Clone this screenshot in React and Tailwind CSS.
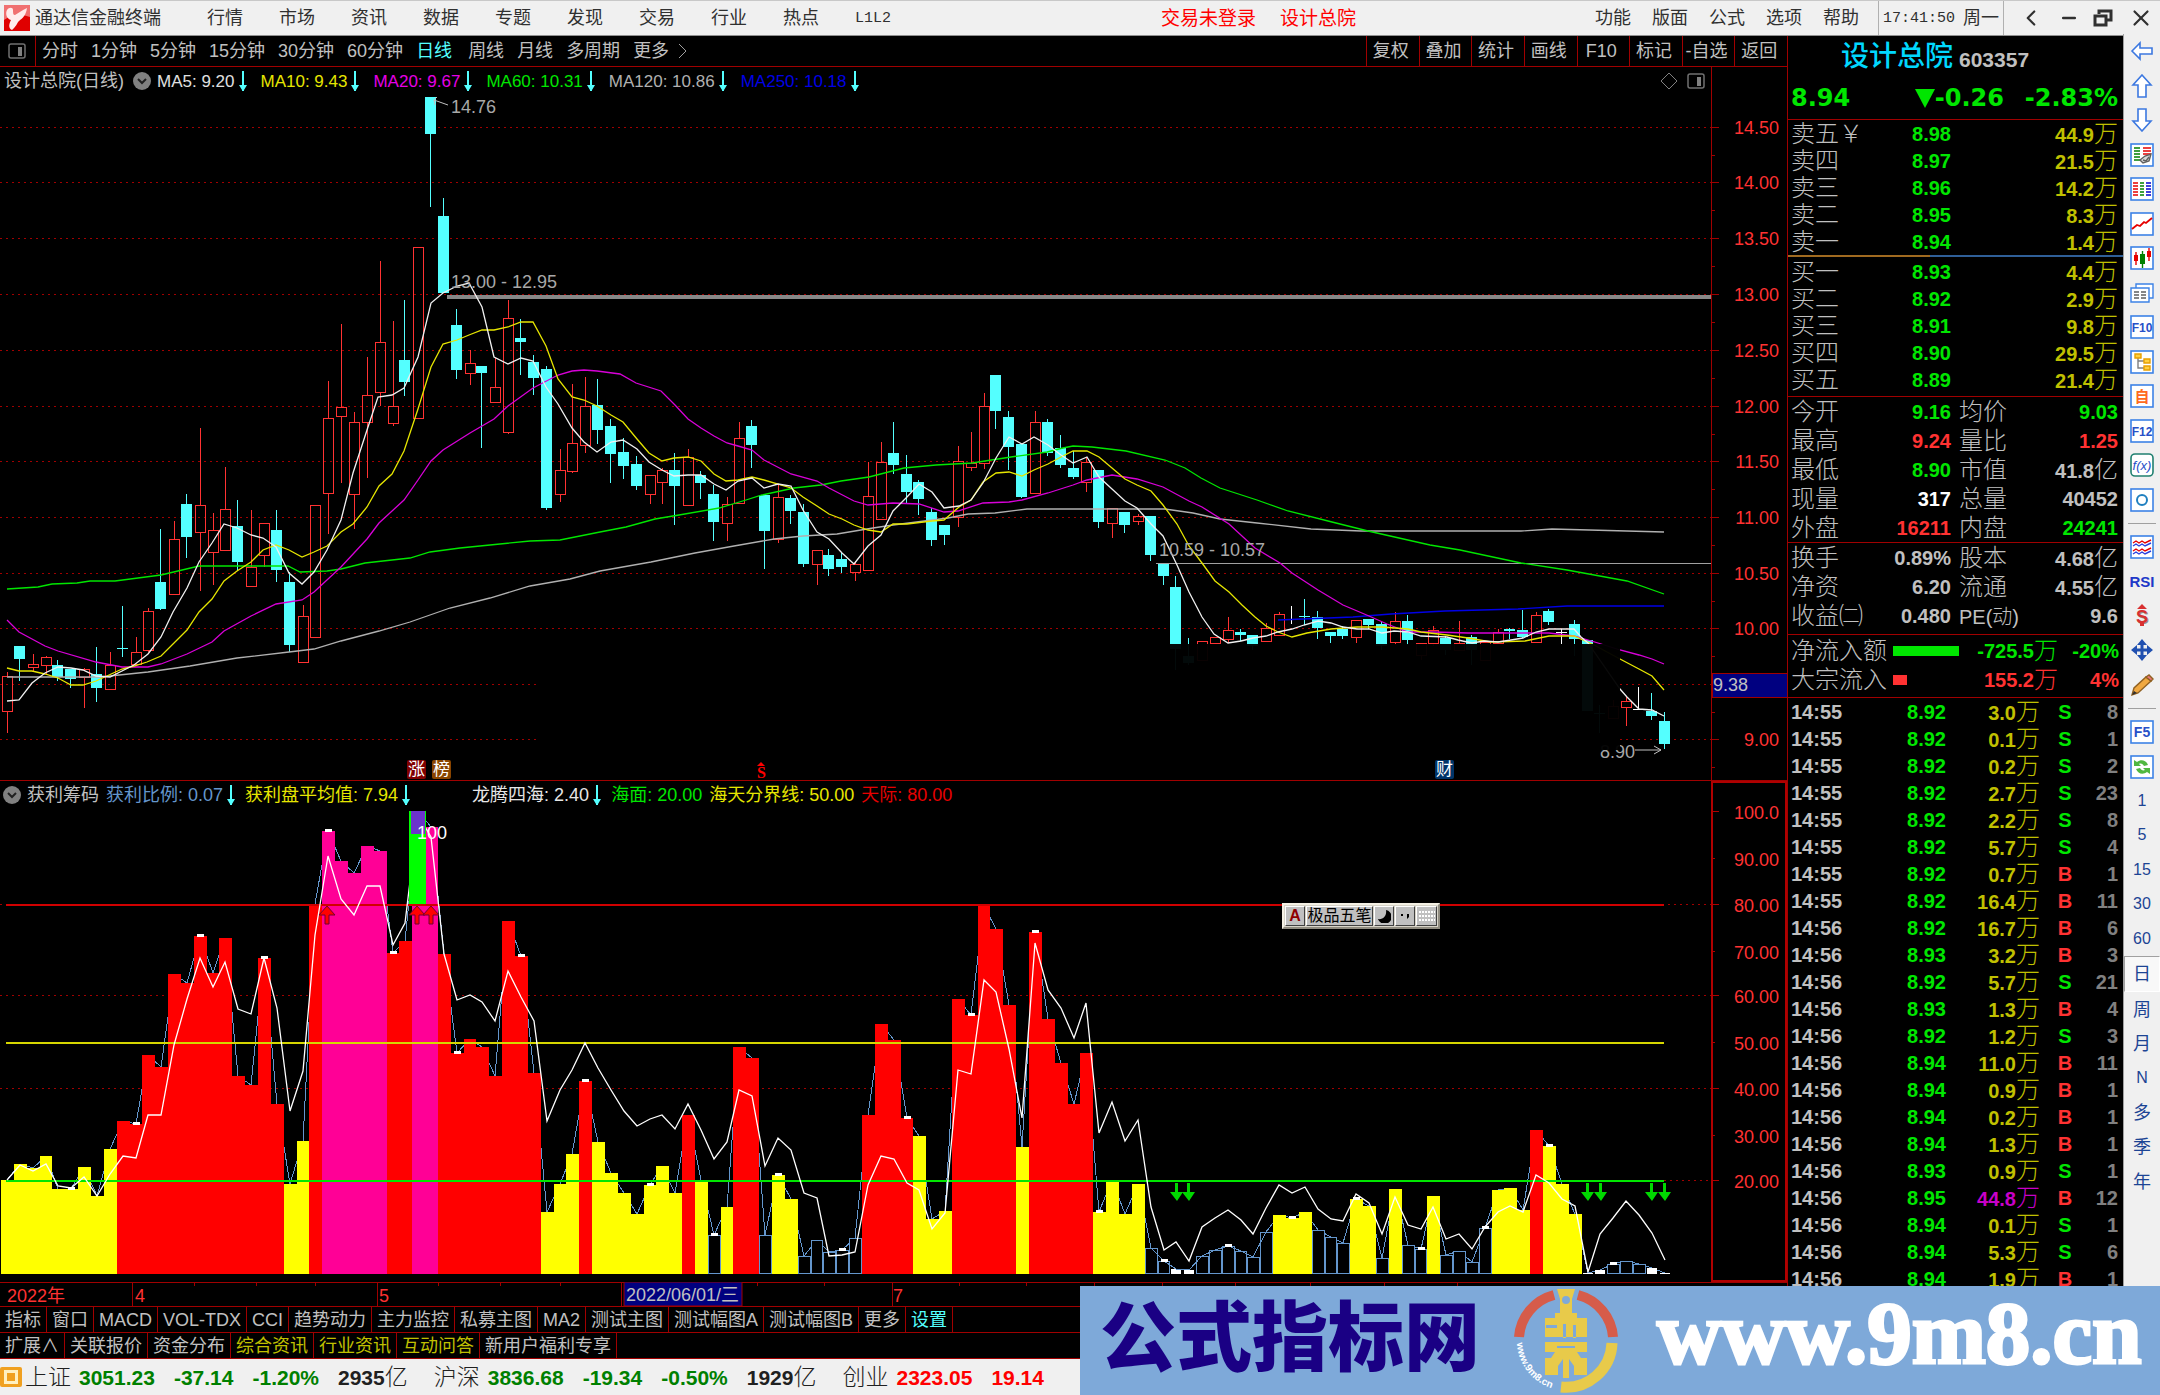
import { ChevronLeft, Minus, X } from 'lucide-react'

const UI = "font-['Liberation_Sans','Noto_Sans_CJK_SC',sans-serif]"

const MENU = ['行情', '市场', '资讯', '数据', '专题', '发现', '交易', '行业', '热点']
const MENU_RIGHT = ['功能', '版面', '公式', '选项', '帮助']
const PERIODS = ['分时', '1分钟', '5分钟', '15分钟', '30分钟', '60分钟', '日线', '周线', '月线', '多周期', '更多']
const TOOLS = ['复权', '叠加', '统计', '画线', 'F10', '标记', '-自选', '返回']

const MA = [
    ['MA5: 9.20', 'text-[#e0e0e0]'],
    ['MA10: 9.43', 'text-[#e6e600]'],
    ['MA20: 9.67', 'text-[#e600e6]'],
    ['MA60: 10.31', 'text-[#00e600]'],
    ['MA120: 10.86', 'text-[#b0b0b0]'],
    ['MA250: 10.18', 'text-[#0000e6]'],
]

const SELL = [
    ['卖五', '8.98', '44.9'],
    ['卖四', '8.97', '21.5'],
    ['卖三', '8.96', '14.2'],
    ['卖二', '8.95', '8.3'],
    ['卖一', '8.94', '1.4'],
]
const BUY = [
    ['买一', '8.93', '4.4'],
    ['买二', '8.92', '2.9'],
    ['买三', '8.91', '9.8'],
    ['买四', '8.90', '29.5'],
    ['买五', '8.89', '21.4'],
]

const G = 'text-[#00e600]'
const R = 'text-[#ff3232]'
const W = 'text-[#c0c0c0]'

const INFO = [
    ['今开', '9.16', G, '均价', '9.03', G],
    ['最高', '9.24', R, '量比', '1.25', R],
    ['最低', '8.90', G, '市值', '41.8亿', W],
    ['现量', '317', 'text-white', '总量', '40452', W],
    ['外盘', '16211', R, '内盘', '24241', G],
]
const INFO2 = [
    ['换手', '0.89%', W, '股本', '4.68亿', W],
    ['净资', '6.20', W, '流通', '4.55亿', W],
    ['收益㈡', '0.480', W, 'PE(动)', '9.6', W],
]

const TICKS = [
    ['14:55', '8.92', '3.0', 'S', 8],
    ['14:55', '8.92', '0.1', 'S', 1],
    ['14:55', '8.92', '0.2', 'S', 2],
    ['14:55', '8.92', '2.7', 'S', 23],
    ['14:55', '8.92', '2.2', 'S', 8],
    ['14:55', '8.92', '5.7', 'S', 4],
    ['14:55', '8.92', '0.7', 'B', 1],
    ['14:55', '8.92', '16.4', 'B', 11],
    ['14:56', '8.92', '16.7', 'B', 6],
    ['14:56', '8.93', '3.2', 'B', 3],
    ['14:56', '8.92', '5.7', 'S', 21],
    ['14:56', '8.93', '1.3', 'B', 4],
    ['14:56', '8.92', '1.2', 'S', 3],
    ['14:56', '8.94', '11.0', 'B', 11],
    ['14:56', '8.94', '0.9', 'B', 1],
    ['14:56', '8.94', '0.2', 'B', 1],
    ['14:56', '8.94', '1.3', 'B', 1],
    ['14:56', '8.93', '0.9', 'S', 1],
    ['14:56', '8.95', '44.8', 'B', 12],
    ['14:56', '8.94', '0.1', 'S', 1],
    ['14:56', '8.94', '5.3', 'S', 6],
    ['14:56', '8.94', '1.9', 'B', 1],
]

const TABS = ['指标', '窗口', 'MACD', 'VOL-TDX', 'CCI', '趋势动力', '主力监控', '私募主图', 'MA2', '测试主图', '测试幅图A', '测试幅图B', '更多', '设置']
const LINKS = ['扩展∧', '关联报价', '资金分布', '综合资讯', '行业资讯', '互动问答', '新用户福利专享']

const INDEXES = [
    { name: '上证', last: '3051.23', diff: '-37.14', pct: '-1.20%', amount: '2935', tone: 'text-[#008000]' },
    { name: '沪深', last: '3836.68', diff: '-19.34', pct: '-0.50%', amount: '1929', tone: 'text-[#008000]' },
    { name: '创业', last: '2323.05', diff: '19.14', tone: 'text-[#ff0000]' },
]

// kind, body top, body bottom, high, low
const CANDLES = [
    ['r', 676, 711, 672, 733], ['c', 646, 659, 646, 681], ['r', 664, 667, 654, 672], ['r', 657, 665, 656, 675],
    ['c', 665, 677, 660, 681], ['c', 669, 679, 669, 688], ['r', 669, 677, 668, 708], ['c', 674, 688, 647, 702],
    ['r', 665, 689, 652, 689], ['c', 648, 649, 606, 657], ['r', 652, 664, 637, 664], ['r', 611, 650, 608, 652],
    ['c', 582, 609, 529, 610], ['r', 539, 594, 521, 594], ['c', 504, 537, 494, 558], ['r', 505, 532, 428, 591],
    ['r', 530, 552, 513, 585], ['r', 509, 550, 467, 550], ['c', 526, 562, 500, 571], ['r', 567, 586, 510, 586],
    ['r', 523, 555, 523, 567], ['c', 530, 570, 510, 582], ['c', 582, 645, 572, 652], ['r', 616, 662, 605, 662],
    ['r', 505, 637, 505, 637], ['r', 418, 493, 381, 534], ['r', 407, 416, 324, 483], ['r', 422, 494, 412, 529],
    ['r', 395, 422, 357, 478], ['r', 342, 392, 261, 406], ['r', 406, 423, 321, 426], ['c', 360, 382, 300, 396],
    ['r', 247, 418, 247, 418], ['c', 97, 134, 97, 207], ['c', 216, 293, 198, 293], ['c', 325, 370, 309, 379],
    ['r', 363, 373, 350, 385], ['c', 366, 373, 366, 448], ['r', 387, 402, 358, 402], ['r', 318, 432, 300, 434],
    ['c', 338, 342, 319, 375], ['c', 362, 378, 355, 395], ['c', 369, 508, 366, 510], ['r', 470, 494, 449, 502],
    ['r', 443, 471, 384, 473], ['r', 406, 445, 377, 453], ['c', 405, 430, 379, 444], ['c', 426, 454, 419, 483],
    ['c', 452, 466, 438, 479], ['c', 464, 486, 456, 490], ['r', 475, 494, 475, 504], ['r', 470, 482, 468, 504],
    ['c', 470, 486, 453, 525], ['r', 457, 505, 449, 505], ['c', 475, 483, 471, 499], ['c', 494, 522, 485, 541],
    ['r', 504, 523, 497, 541], ['r', 438, 503, 422, 503], ['c', 426, 445, 420, 468], ['c', 495, 531, 495, 569],
    ['r', 497, 539, 484, 543], ['c', 498, 511, 495, 524], ['c', 512, 564, 504, 567], ['r', 550, 564, 550, 585],
    ['c', 555, 569, 549, 576], ['c', 559, 567, 552, 573], ['r', 564, 572, 561, 581], ['r', 496, 570, 462, 570],
    ['r', 462, 519, 442, 520], ['c', 453, 465, 422, 474], ['c', 474, 492, 455, 503], ['c', 482, 499, 480, 515],
    ['c', 512, 540, 508, 546], ['c', 525, 535, 525, 545], ['r', 461, 517, 446, 527], ['r', 463, 467, 432, 471],
    ['r', 406, 463, 393, 469], ['c', 375, 411, 375, 429], ['c', 417, 447, 411, 470], ['c', 444, 497, 444, 498],
    ['r', 422, 493, 411, 494], ['c', 422, 453, 419, 456], ['c', 448, 465, 435, 468], ['c', 468, 477, 451, 479],
    ['r', 462, 482, 457, 492], ['c', 470, 522, 470, 528], ['r', 508, 523, 508, 538], ['c', 512, 525, 512, 533],
    ['r', 516, 521, 514, 525], ['c', 516, 555, 516, 561], ['c', 564, 576, 564, 585], ['c', 587, 649, 576, 670],
    ['c', 656, 663, 638, 665], ['r', 641, 660, 641, 660], ['r', 637, 643, 637, 643], ['r', 630, 639, 617, 643],
    ['c', 632, 635, 629, 641], ['c', 635, 646, 635, 650], ['r', 628, 641, 623, 641], ['r', 614, 635, 612, 636],
    ['w', 619, 620, 606, 624], ['c', 616, 617, 599, 625], ['c', 617, 628, 611, 639], ['c', 632, 636, 632, 643],
    ['c', 629, 636, 626, 639], ['r', 620, 637, 620, 643], ['c', 619, 625, 619, 629], ['c', 624, 646, 622, 650],
    ['r', 621, 642, 612, 645], ['c', 621, 640, 615, 645], ['r', 643, 655, 643, 660], ['r', 630, 643, 626, 646],
    ['c', 638, 650, 636, 655], ['r', 643, 650, 621, 650], ['c', 637, 650, 635, 665], ['r', 642, 660, 642, 660],
    ['r', 632, 643, 629, 643], ['c', 629, 631, 628, 639], ['c', 630, 637, 610, 638], ['r', 615, 642, 612, 643],
    ['c', 611, 622, 609, 625], ['w', 632, 633, 629, 644], ['c', 624, 639, 620, 656], ['c', 640, 711, 640, 711],
    ['c', 713, 714, 705, 733], ['r', 706, 718, 700, 718], ['r', 701, 707, 696, 726], ['w', 709, 710, 687, 710],
    ['c', 711, 716, 693, 720], ['c', 721, 744, 712, 749],
]

const MA5 =
    '7,701 19,700 32,683 45,673 58,667 71,668 83,670 96,676 110,677 122,671 134,665 148,654 161,637 173,612 187,588 199,562 212,543 224,524 237,528 251,535 263,538 276,547 289,573 302,584 314,572 327,550 341,520 353,473 367,430 378,397 392,395 404,388 418,357 431,303 443,293 457,286 469,283 482,307 494,357 508,364 521,358 533,361 546,387 558,404 572,428 584,442 597,452 611,442 623,440 637,449 649,462 662,470 674,476 688,475 701,475 714,484 726,490 738,481 752,478 764,488 778,484 791,486 803,510 817,532 829,539 842,553 854,564 868,546 881,535 893,511 907,497 919,484 932,492 944,508 959,506 971,500 983,483 996,458 1009,437 1022,444 1034,437 1048,445 1061,455 1073,463 1087,457 1099,477 1112,489 1125,501 1137,508 1151,524 1163,536 1177,565 1189,592 1202,617 1214,634 1228,643 1241,641 1253,638 1266,636 1278,632 1292,629 1304,625 1318,621 1331,623 1343,627 1357,629 1369,629 1382,633 1394,631 1408,632 1421,636 1447,637 1458,640 1472,643 1484,641 1498,642 1511,640 1523,638 1536,632 1549,629 1562,629 1574,629 1581,637 1588,643 1620,689 1627,697 1639,709 1652,710 1664,716'
const MA10 =
    '7,668 19,671 32,671 45,674 58,678 71,685 83,685 96,681 109,675 122,669 134,666 147,662 161,656 173,644 187,630 199,612 212,599 224,581 237,571 251,562 263,550 276,545 289,550 302,557 314,552 327,546 341,532 353,524 367,507 379,486 392,474 404,451 418,409 431,367 443,344 457,340 469,335 482,330 494,330 508,327 521,322 533,322 546,346 558,379 572,397 584,400 597,406 611,415 623,422 637,439 649,453 662,461 674,458 688,457 701,461 714,474 726,481 738,480 752,477 764,480 778,484 791,488 803,497 817,506 829,514 842,519 854,525 868,530 881,532 893,524 907,524 932,521 944,520 959,507 971,500 983,482 996,473 1009,472 1022,476 1034,470 1048,464 1061,457 1073,451 1087,451 1099,457 1112,468 1125,479 1137,485 1151,491 1163,505 1177,524 1189,546 1202,563 1215,581 1229,592 1242,605 1255,617 1266,626 1278,632 1292,637 1307,633 1319,631 1331,629 1357,627 1382,627 1408,629 1421,632 1447,635 1468,638 1491,642 1525,641 1549,636 1574,636 1594,645 1620,659 1639,669 1652,676 1664,690'
const MA20 =
    '7,620 19,632 45,646 58,651 96,662 122,667 148,667 161,664 187,654 212,642 224,631 251,616 276,604 302,600 314,592 341,567 367,539 379,523 404,500 418,480 431,461 443,450 470,433 494,419 508,406 533,388 558,375 572,371 584,370 597,371 620,374 636,383 661,391 675,405 688,419 701,428 714,436 727,443 738,446 752,450 764,460 791,474 817,481 829,488 854,501 868,505 893,503 919,504 944,512 958,511 983,503 1009,502 1022,500 1048,493 1073,485 1087,480 1112,475 1137,479 1163,487 1189,501 1202,507 1229,524 1255,548 1280,563 1292,573 1318,590 1343,605 1369,616 1387,624 1408,632 1433,632 1468,633 1529,633 1549,633 1574,636 1598,643 1620,650 1639,655 1652,659 1664,664'
const MA60 =
    '7,589 38,587 52,584 77,583 90,581 115,581 161,575 199,566 224,566 288,566 300,572 327,571 341,569 365,563 410,558 430,552 460,548 490,545 530,541 560,540 600,532 626,527 655,519 679,515 719,508 746,500 762,495 794,488 821,485 841,481 869,477 904,468 936,465 972,463 1011,457 1047,452 1063,448 1073,446 1092,447 1126,451 1165,460 1185,468 1201,478 1220,488 1257,500 1288,511 1332,522 1368,531 1430,545 1460,550 1521,563 1567,570 1627,581 1664,594'
const MA120 =
    '7,677 100,677 148,672 190,666 237,658 289,652 314,649 341,641 379,631 410,622 450,608 490,598 530,586 570,579 600,571 651,562 695,553 734,546 774,539 803,536 837,534 873,528 893,525 948,518 968,514 995,513 1027,509 1165,509 1193,513 1220,519 1257,523 1311,529 1361,531 1521,531 1552,529 1664,532'
const MA250 = '1278,620 1353,617 1391,614 1445,611 1518,609 1567,606 1664,606'

// bar colour + top edge: y yellow, r red, m magenta, h hollow, w white
const BARS =
    'y1180 y1164 y1168 y1156 y1189 y1189 y1167 y1196 y1149 r1121 r1124 r1055 r1067 r974 r983 r936 r973 r938 r1076 r1085 r958 r1104 y1184 y1141 r904 m831 m861 m873 m846 m851 r953 r941 m811 m827 r954 r1053 r1039 r1047 r1076 r921 r956 r1073 y1212 y1184 y1154 r1081 y1142 y1173 y1193 y1214 y1185 y1166 y1193 r1115 y1180 h1235 y1207 r1047 r1058 h1235 y1175 y1199 h1256 h1240 h1252 h1250 h1238 r1115 r1024 r1040 r1118 y1136 y1219 y1211 r999 r1015 r906 r929 r1005 y1147 r932 r1019 r1063 r1104 r1053 y1212 y1180 y1214 y1184 h1248 h1261 w1269 w1270 h1256 h1250 h1246 h1251 h1257 h1232 y1215 y1218 y1212 h1230 h1237 h1243 y1199 y1206 h1258 y1189 h1245 h1249 y1196 h1255 h1251 h1262 h1228 y1190 y1188 y1210 r1130 y1146 y1184 y1214 w1273 w1270 h1264 h1261 h1264 w1268 w1273'
        .split(' ')
        .map(s => [s[0], Number(s.slice(1))])

const AVG = [
    1180, 1165, 1171, 1164, 1186, 1188, 1177, 1196, 1174, 1156, 1158, 1115, 1115, 1045, 999, 958, 987, 962, 1009, 1014,
    958, 1008, 1111, 1071, 935, 856, 899, 915, 886, 886, 945, 923, 815, 837, 954, 1000, 995, 1002, 1021, 971,
    997, 1021, 1121, 1090, 1070, 1043, 1068, 1090, 1111, 1126, 1119, 1115, 1129, 1104, 1130, 1159, 1142, 1090, 1096, 1166,
    1138, 1150, 1193, 1198, 1256, 1255, 1252, 1185, 1156, 1159, 1183, 1190, 1229, 1213, 1070, 1074, 980, 992, 1049, 1118,
    943, 990, 1008, 1038, 1003, 1133, 1102, 1141, 1120, 1207, 1250, 1242, 1261, 1227, 1218, 1210, 1220, 1234, 1208, 1185,
    1193, 1187, 1209, 1219, 1221, 1194, 1203, 1234, 1197, 1225, 1229, 1207, 1239, 1234, 1249, 1227, 1212, 1206, 1212, 1175,
    1183, 1199, 1206, 1272, 1234, 1218, 1201, 1215, 1233, 1260,
]

const FILL = { y: '#ffff00', r: '#ff0000', m: '#ff0096', h: '#000000', w: '#ffffff' }
const cx = i => Math.round(7 + i * 12.85)

const PRICES = [
    ['14.50', 127], ['14.00', 182], ['13.50', 238], ['13.00', 294], ['12.50', 350], ['12.00', 406],
    ['11.50', 461], ['11.00', 517], ['10.50', 573], ['10.00', 628], ['', 684], ['9.00', 739],
]
const LEVELS = [
    ['100.0', 811], ['90.00', 858], ['80.00', 904], ['70.00', 951], ['60.00', 995],
    ['50.00', 1042], ['40.00', 1088], ['30.00', 1135], ['20.00', 1180],
]

function DownArrow() {
    return (
        <svg viewBox="0 0 8 20" className="ml-1 h-5 w-2 shrink-0" fill="#54ffff">
            <path d="M3 0h2v14h3l-3 5v1H3v-1l-3-5h3z" />
        </svg>
    )
}

function FoldButton() {
    return (
        <button aria-label="折叠" className="grid size-[18px] place-items-center rounded-full bg-[#808080]">
            <svg viewBox="0 0 12 12" className="size-3" fill="none" stroke="#202020" strokeWidth="2">
                <path d="M2 4l4 4 4-4" />
            </svg>
        </button>
    )
}

function PaneIcon() {
    return (
        <svg viewBox="0 0 18 16" className="h-4 w-[18px]" fill="none" stroke="#707070" strokeWidth="1.5">
            <rect x="1" y="1" width="16" height="14" rx="2" />
            <rect x="10" y="4" width="4" height="9" fill="#808080" stroke="none" />
        </svg>
    )
}

function MenuBar() {
    return (
        <header className="flex h-9 items-center border-t border-b border-t-[#c8c8c8] border-b-[#909090] bg-[#f0f0f0] text-lg leading-none whitespace-nowrap text-[#303030]">
            <svg viewBox="0 0 26 26" className="mr-[5px] ml-1 size-[26px]">
                <rect width="26" height="26" fill="#e00000" />
                <path d="M0 0h26v12C18 9 8 9 0 15z" fill="#f07070" />
                <path d="M3 5c2-3 6-3 6 0 0 3 0 5 2 5 4-2 7-5 12-7-1 7-4 10-8 13-2 2-3 6-7 9-4-2-3-6-1-10C3 14 1 9 3 5z" fill="#ffecec" />
            </svg>
            <span>通达信金融终端</span>
            <nav className="ml-[46px] flex items-center gap-9">
                {MENU.map(m => (
                    <button key={m}>{m}</button>
                ))}
                <button className="font-['Liberation_Mono',monospace] text-[15px]">L1L2</button>
            </nav>
            <div className="ml-[270px] flex gap-6 text-[19px] text-[#ff0000]">
                <button>交易未登录</button>
                <button>设计总院</button>
            </div>
            <div className="ml-auto flex h-full items-center">
                <nav className="flex gap-[21px] pr-[19px]">
                    {MENU_RIGHT.map(m => (
                        <button key={m}>{m}</button>
                    ))}
                </nav>
                <div className="flex h-full w-[126px] items-center gap-2 border-x border-[#b0b0b0] pl-1">
                    <span className="font-['Liberation_Mono',monospace] text-[15px]">17:41:50</span>
                    <span>周一</span>
                </div>
                <div className="flex w-[156px] items-center justify-between pr-[6px] pl-[14px]">
                    <button aria-label="后退"><ChevronLeft size={26} strokeWidth={2} /></button>
                    <button aria-label="最小化"><Minus size={20} strokeWidth={3} /></button>
                    <button aria-label="还原">
                        <svg viewBox="0 0 20 18" className="h-[18px] w-5" fill="none" stroke="#303030" strokeWidth="3">
                            <path d="M6 5V2h12v9h-4M2 7h11v9H2z" />
                        </svg>
                    </button>
                    <button aria-label="关闭"><X size={26} strokeWidth={2} /></button>
                </div>
            </div>
        </header>
    )
}

function PeriodBar() {
    return (
        <div className="flex h-[31px] items-stretch border-b border-[#a00000] text-lg leading-none whitespace-nowrap text-[#c0c0c0]">
            <button aria-label="面板" className="flex w-9 items-center border-r border-[#a00000] pl-2">
                <PaneIcon />
            </button>
            <div className="flex items-center gap-[13px] pl-[6px]">
                {PERIODS.map(p => (
                    <button key={p} className={p === '日线' ? 'pr-[3px] text-[#54ffff]' : ''}>{p}</button>
                ))}
                <svg viewBox="0 0 9 16" className="-ml-1 h-4 w-[9px]" fill="none" stroke="#a0a0a0">
                    <path d="M1 1l7 7-7 7" />
                </svg>
            </div>
            <div className="ml-auto grid w-[421px] grid-cols-8">
                {TOOLS.map(t => (
                    <button key={t} className="border-l border-[#a00000] pr-1">{t}</button>
                ))}
            </div>
        </div>
    )
}

function Candle({ i, data }) {
    const [kind, top, bottom, high, low] = data
    const x = cx(i)
    if (kind === 'r') {
        return (
            <g fill="none" stroke="#ff3232">
                <path d={`M${x} ${high}V${top}M${x} ${bottom}V${low}`} />
                <rect x={x - 5} y={top} width="10" height={bottom - top} />
            </g>
        )
    }
    const color = kind === 'w' ? '#ffffff' : '#54ffff'
    return (
        <g fill={color}>
            <rect x={x - 1} y={high} width="1" height={low - high} />
            <rect x={x - 6} y={top} width="11" height={bottom - top} />
        </g>
    )
}

function Badge({ x, y, fill, children }) {
    return (
        <g>
            <rect x={x} y={y} width="19" height="19" rx="2" fill={fill} />
            <text x={x + 1} y={y + 15} fontSize="17" fill="#fff">{children}</text>
        </g>
    )
}

function PriceChart() {
    return (
        <section>
            <div className="flex h-7 items-stretch">
                <div className="flex flex-1 items-center pl-1 text-[17px] leading-none whitespace-nowrap">
                    <span className="mr-[9px] text-lg leading-none text-[#c0c0c0]">设计总院(日线)</span>
                    <FoldButton />
                    <div className="flex gap-[14px] pl-[6px]">
                        {MA.map(([text, tone]) => (
                            <span key={text} className={`flex items-center ${tone}`}>
                                {text}
                                <DownArrow />
                            </span>
                        ))}
                    </div>
                    <svg viewBox="0 0 18 18" className="mr-[9px] ml-auto size-[18px]" fill="none" stroke="#808080">
                        <path d="M9 1l8 8-8 8-8-8z" />
                    </svg>
                    <div className="pr-[6px]"><PaneIcon /></div>
                </div>
                <div className="w-[76px] border-l border-[#a00000]" />
            </div>
            <svg viewBox="0 95 1787 686" className="block w-full overflow-visible" fontSize="18">
                <g stroke="#a00000" strokeDasharray="2 4" shapeRendering="crispEdges">
                    {PRICES.map(([, y]) => (
                        <path key={y} d={y > 680 ? `M0 ${y}H538M1620 ${y}H1711` : `M0 ${y}H1711`} />
                    ))}
                </g>
                <rect x="447" y="295" width="1264" height="4" fill="#888888" />
                <rect x="1156" y="563" width="555" height="1" fill="#a0a0a0" />
                <g shapeRendering="crispEdges">
                    {CANDLES.map((c, i) => (
                        <Candle key={i} i={i} data={c} />
                    ))}
                </g>
                <g fill="none" strokeWidth="1.3">
                    <polyline points={MA250} stroke="#0000e6" />
                    <polyline points={MA120} stroke="#b0b0b0" />
                    <polyline points={MA60} stroke="#00e600" />
                    <polyline points={MA20} stroke="#d800d8" />
                    <polyline points={MA10} stroke="#e6e600" />
                    <polyline points={MA5} stroke="#f0f0f0" />
                </g>
                <g fill="#a8a8a8">
                    <text x="451" y="113">14.76</text>
                    <text x="451" y="288">13.00 - 12.95</text>
                    <text x="1159" y="556">10.59 - 10.57</text>
                    <text x="1600" y="758">8.90</text>
                </g>
                <path d="M448 105l-14-5M437 97l-3 3 1 5" fill="none" stroke="#c0c0c0" />
                <path d="M1635 750h26M1654 746l7 4-7 4" fill="none" stroke="#c0c0c0" />
                <rect x="538" y="644" width="1082" height="106" fill="#000" fillOpacity=".96" />
                <Badge x={407} y={760} fill="#800000">涨</Badge>
                <Badge x={432} y={760} fill="#8a4500">榜</Badge>
                <Badge x={1435} y={760} fill="#003468">财</Badge>
                <path d="M761 762l4 4h-8z" fill="#ff0000" />
                <text x="757" y="778" fontSize="16" fontWeight="700" fill="#ff0000" fontFamily="Liberation Serif">S</text>

                <g stroke="#a00000" shapeRendering="crispEdges">
                    <path d="M1711.5 95V780M0 780.5H1787" />
                    {PRICES.map(([, y]) => (
                        <path key={y} d={`M1712 ${y}h7M1712 ${y + 28}h3`} />
                    ))}
                </g>
                <rect x="1712" y="673" width="75" height="24" fill="#000080" stroke="#a00000" shapeRendering="crispEdges" />
                <text x="1713" y="691" fill="#c0c0c0">9.38</text>
                <g fill="#ff3232" textAnchor="end">
                    {PRICES.map(([t, y]) => (
                        <text key={y} x="1779" y={y + 7}>{t}</text>
                    ))}
                </g>
            </svg>
        </section>
    )
}

function ProfitChart() {
    return (
        <section>
            <div className="flex h-7 items-center pl-[3px] text-lg leading-none whitespace-nowrap">
                <FoldButton />
                <span className="ml-[6px] text-[#c0c0c0]">获利筹码</span>
                <span className="ml-[7px] flex items-center text-[#6496cc]">获利比例: 0.07<DownArrow /></span>
                <span className="ml-[10px] flex items-center text-[#e6e600]">获利盘平均值: 7.94<DownArrow /></span>
                <span className="ml-[62px] flex items-center text-[#e6e6e6]">龙腾四海: 2.40<DownArrow /></span>
                <span className="ml-[10px] text-[#00e600]">海面: 20.00</span>
                <span className="ml-[7px] text-[#e6e600]">海天分界线: 50.00</span>
                <span className="ml-[7px] text-[#e60000]">天际: 80.00</span>
            </div>
            <svg viewBox="0 809 1787 473" className="block w-full overflow-visible" fontSize="18">
                <g shapeRendering="crispEdges">
                    <g stroke="#a00000" strokeDasharray="2 4">
                        <path d="M0 904.5H1711M0 995.5H1711M0 1088.5H1711M1664 1180.5H1711" />
                    </g>
                    <polyline points={BARS.map(([, y], i) => `${cx(i)},${y}`).join(' ')} fill="none" stroke="#6496cc" />
                    {BARS.map(([kind, y], i) => {
                        const x = cx(i) - 6
                        const w = cx(i + 1) - cx(i)
                        return kind === 'h' ? (
                            <rect key={i} x={x + 0.5} y={y + 0.5} width={w - 1} height={1273 - y} fill="#000" stroke="#6496cc" />
                        ) : (
                            <rect key={i} x={kind === 'w' ? x + 1 : x} y={y} width={kind === 'w' ? 10 : w} height={1274 - y} fill={FILL[kind]} />
                        )
                    })}
                    <polyline
                        points={BARS.map(([, y], i) => `${cx(i)},${y}`).slice(89, 99).join(' ')}
                        fill="none"
                        stroke="#6496cc"
                    />
                    {BARS.map(([, y], i) => (i >= 5 && i % 5 === 0 ? <rect key={i} x={cx(i) - 3} y={y - 2} width="7" height="3" fill="#fff" /> : null))}
                    <path d="M6 904.5H1664" stroke="#d00000" strokeWidth="2" />
                    <path d="M6 1042.5H1664" stroke="#d6d600" strokeWidth="2" />
                    <path d="M6 1180.5H1664" stroke="#00e600" strokeWidth="2" />
                </g>
                <polyline points={AVG.map((y, i) => `${cx(i)},${y}`).join(' ')} fill="none" stroke="#fff" strokeWidth="1.3" />
                <rect x="409" y="811" width="17" height="93" fill="#00ff00" />
                <rect x="411" y="811" width="14" height="23" fill="#6b33cc" />
                <text x="417" y="839" fill="#fff">100</text>
                {[327, 417, 431].map(x => (
                    <path key={x} d={`M${x} 906l8 9h-6v9h-4v-9h-6z`} fill="#ff0000" stroke="#700030" strokeWidth="1" />
                ))}
                {[1176, 1188, 1587, 1600, 1651, 1664].map(x => (
                    <path key={x} d={`M${x - 1} 1183h3v9h5l-6 9-7-9h5z`} fill="#00d800" />
                ))}
                <g stroke="#b00000" fill="none" shapeRendering="crispEdges">
                    <rect x="1712" y="782" width="74" height="499" strokeWidth="2" />
                    {LEVELS.map(([t, y], i) => (
                        <path key={t} d={`M1712 ${y}h${i % 2 ? 3 : 7}`} />
                    ))}
                </g>
                <g fill="#ff3232" textAnchor="end">
                    {LEVELS.map(([t, y]) => (
                        <text key={t} x="1779" y={y + 8}>{t}</text>
                    ))}
                </g>
            </svg>
        </section>
    )
}

function TimeAxis() {
    return (
        <svg viewBox="0 1282 1787 24" className="block w-full" fontSize="18" fill="#ff3232">
            <path
                d="M0 1282.5H1787M132.5 1282V1306M377.5 1282V1306M621.5 1282V1306M892.5 1282V1306M194.5 1282v4M256.5 1282v4M315.5 1282v4M438.5 1282v4M500.5 1282v4M560.5 1282v4M757.5 1282v4M824.5 1282v4M959.5 1282v4M1026.5 1282v4M1094.5 1282v4M1162.5 1282v4M1235.5 1282v4M1310.5 1282v4M1384.5 1282v4M1457.5 1282v4"
                stroke="#a00000"
                shapeRendering="crispEdges"
            />
            <text x="7" y="1302">2022年</text>
            <text x="135" y="1302">4</text>
            <text x="379" y="1302">5</text>
            <text x="893" y="1302">7</text>
            <rect x="624" y="1282" width="118" height="24" fill="#000080" stroke="#a00000" />
            <text x="626" y="1301" fill="#c0c0c0">2022/06/01/三</text>
        </svg>
    )
}

function TabRow({ items, tone }) {
    return (
        <div className="flex h-[26px] border-t border-[#a00000] text-lg leading-none whitespace-nowrap">
            {items.map(t => (
                <button key={t} className={`border-r border-[#a00000] px-[5px] ${tone(t)}`}>{t}</button>
            ))}
        </div>
    )
}

// number in bold with a light 万 / 亿 unit after it
function Qty({ value }) {
    const unit = /[万亿]$/.test(value) ? value.slice(-1) : ''
    return (
        <>
            <b className="text-xl leading-none">{unit ? value.slice(0, -1) : value}</b>
            {unit && <span className="text-2xl leading-none font-light">{unit}</span>}
        </>
    )
}

function OrderBook({ rows, label }) {
    return (
        <table aria-label={label} className="w-full table-fixed leading-none whitespace-nowrap">
            <tbody>
                {rows.map(([name, price, vol]) => (
                    <tr key={name} className="h-[27px]">
                        <td className="w-[80px] p-0 pl-[3px] text-2xl leading-none font-light text-[#c0c0c0]">
                            {name}
                            {name === '卖五' && <span className="text-2xl leading-none">￥</span>}
                        </td>
                        <td className="w-[83px] p-0 text-right text-[#00e600]"><Qty value={price} /></td>
                        <td className="p-0 pr-[5px] text-right text-[#c0c000]"><Qty value={vol + '万'} /></td>
                    </tr>
                ))}
            </tbody>
        </table>
    )
}

function InfoTable({ rows }) {
    return (
        <table className="w-full table-fixed leading-none whitespace-nowrap">
            <tbody>
                {rows.map(([a, av, at, b, bv, bt]) => (
                    <tr key={a} className="h-[29px]">
                        <td className="w-[83px] p-0 pl-[3px] text-2xl leading-none font-light text-[#c0c0c0]">{a}</td>
                        <td className={`w-[80px] p-0 text-right ${at}`}><Qty value={av} /></td>
                        <td className="w-[80px] p-0 pl-2 text-2xl leading-none font-light text-[#c0c0c0]">
                            {b === 'PE(动)' ? <b className="text-xl leading-none">PE(<span className="font-light">动</span>)</b> : b}
                        </td>
                        <td className={`p-0 pr-[5px] text-right ${bt}`}><Qty value={bv} /></td>
                    </tr>
                ))}
            </tbody>
        </table>
    )
}

function QuotePanel() {
    return (
        <aside className="w-[336px] shrink-0 border-l border-[#a00000]">
            <div className="h-[84px] border-b border-[#a00000]">
                <div className="flex h-[42px] items-center gap-[6px] pl-[53px] leading-none">
                    <h1 className="text-[28px] font-medium text-[#00d8ff]">设计总院</h1>
                    <b className="pt-1 text-[21px] text-[#c0c0c0]">603357</b>
                </div>
                <div className="flex h-[40px] items-center pr-[5px] pl-[3px] font-['DejaVu_Sans',sans-serif] text-2xl leading-none font-bold text-[#00e600]">
                    <span>8.94</span>
                    <svg viewBox="0 0 20 20" className="ml-auto size-5" fill="#00e600">
                        <path d="M0 1h20L10 20z" />
                    </svg>
                    <span className="w-[70px]">-0.26</span>
                    <span className="ml-[20px]">-2.83%</span>
                </div>
            </div>
            <OrderBook rows={SELL} label="卖盘" />
            <div className="flex h-[2px]">
                <div className="w-[142px] bg-[#a06a20]" />
                <div className="flex-1 bg-[#2f5f98]" />
            </div>
            <div className="border-b border-[#a00000] pt-px pb-[3px]">
                <OrderBook rows={BUY} label="买盘" />
            </div>
            <div className="border-b border-[#a00000]"><InfoTable rows={INFO} /></div>
            <div className="border-b border-[#a00000] pb-1"><InfoTable rows={INFO2} /></div>
            <div className="border-b border-[#a00000] pt-px pr-1 pb-[3px] pl-[3px] leading-none whitespace-nowrap">
                <div className="flex h-[29px] items-center">
                    <span className="w-[102px] text-2xl leading-none font-light text-[#c0c0c0]">净流入额</span>
                    <div className="h-[10px] w-[66px] bg-[#00e600]" />
                    <div className="flex flex-1 items-center justify-end text-[#00e600]"><Qty value="-725.5万" /></div>
                    <div className="w-[61px] text-right text-[#00e600]"><Qty value="-20%" /></div>
                </div>
                <div className="flex h-[29px] items-center">
                    <span className="w-[102px] text-2xl leading-none font-light text-[#c0c0c0]">大宗流入</span>
                    <div className="h-[10px] w-[14px] bg-[#ff3232]" />
                    <div className="flex flex-1 items-center justify-end text-[#ff3232]"><Qty value="155.2万" /></div>
                    <div className="w-[61px] text-right text-[#ff3232]"><Qty value="4%" /></div>
                </div>
            </div>
            <table aria-label="成交明细" className="w-full table-fixed text-xl leading-none font-bold whitespace-nowrap">
                <tbody>
                    {TICKS.map(([time, price, vol, side, n], i) => (
                        <tr key={i} className="h-[27px]">
                            <td className="w-[75px] p-0 pl-[3px] text-[#c0c0c0]">{time}</td>
                            <td className="w-[83px] p-0 text-right text-[#00e600]">{price}</td>
                            <td className={`w-[94px] p-0 text-right ${vol === '44.8' ? 'text-[#c800c8]' : 'text-[#c0c000]'}`}>
                                <Qty value={vol + '万'} />
                            </td>
                            <td className={`w-[50px] p-0 text-center ${side === 'S' ? G : R}`}>{side}</td>
                            <td className="p-0 pr-[5px] text-right text-[#808080]">{n}</td>
                        </tr>
                    ))}
                </tbody>
            </table>
        </aside>
    )
}

function Glyph({ children, plain }) {
    return (
        <svg viewBox="0 0 24 24" className="size-6" fill="none" strokeWidth="1.4">
            {!plain && <rect x="1" y="1" width="22" height="22" fill="#fff" stroke="#3c82e6" strokeWidth="1.6" />}
            {children}
        </svg>
    )
}

const ARROW = { fill: '#fff', stroke: '#3c78e0', strokeWidth: 1.6 }
const LABEL = { fill: '#2850c8', fontWeight: 700, textAnchor: 'middle' }

const ICONS = [
    ['后退', <Glyph plain><path d="M2 12l8-8v5h12v6H10v5z" {...ARROW} /></Glyph>],
    ['上翻', <Glyph plain><path d="M12 1l9 10h-5v12H8V11H3z" {...ARROW} /></Glyph>],
    ['下翻', <Glyph plain><path d="M12 23l9-10h-5V1H8v12H3z" {...ARROW} /></Glyph>],
    ['报表', <Glyph>
        <path d="M4 5h6M4 8h6M4 11h6M4 14h6M4 17h6" stroke="#008000" />
        <path d="M13 5h8M13 8h8M13 11h8" stroke="#e60000" />
        <path d="M10 17l5-4 6-2-2 7-6 2z" fill="#d8d8d8" stroke="#606060" />
        <path d="M13 17l3 1 3-4" stroke="#606060" />
    </Glyph>],
    ['行情', <Glyph>
        <path d="M3 6h5M3 9h5M3 12h5M3 15h5M3 18h5" stroke="#e60000" />
        <path d="M10 6h4M10 9h4M10 12h4M10 15h4M10 18h4" stroke="#008000" />
        <path d="M16 6h5M16 9h5M16 12h5M16 15h5M16 18h5" stroke="#0000d0" />
    </Glyph>],
    ['分时', <Glyph><path d="M2 17l5-4 3 1 4-4 2 1 6-5" stroke="#e60000" strokeWidth="1.8" /></Glyph>],
    ['K线', <Glyph>
        <path d="M6 6v13M19 2v13" stroke="#e60000" />
        <path d="M12.5 5v17" stroke="#008000" />
        <path d="M4 9h4v6H4zM17 5h4v6h-4z" fill="#e60000" />
        <path d="M10 8h5v10h-5z" fill="#008000" />
    </Glyph>],
    ['多窗口', <Glyph plain>
        <path d="M6 3h17v14H6z" fill="#fff" stroke="#3c82e6" />
        <path d="M1 7h18v14H1z" fill="#fff" stroke="#3c82e6" />
        <path d="M4 11h5M4 14h5M4 17h5M11 11h5M11 14h5M11 17h5" stroke="#606060" />
    </Glyph>],
    ['F10', <Glyph><text x="12" y="17" fontSize="12" {...LABEL}>F10</text></Glyph>],
    ['树', <Glyph>
        <path d="M8 6v12h6M8 11h6" stroke="#808080" />
        <path d="M5 4h6v4H5zM14 9h6v4h-6zM14 16h6v4h-6z" fill="#ffd040" stroke="#e8a000" />
    </Glyph>],
    ['自选', <Glyph><text x="12" y="18" fontSize="15" {...LABEL} fill="#ff6a20">自</text></Glyph>],
    ['F12', <Glyph><text x="12" y="17" fontSize="12" {...LABEL}>F12</text></Glyph>],
    ['公式', <Glyph plain>
        <rect x="1" y="1" width="22" height="22" rx="4" fill="#fff" stroke="#208070" strokeWidth="1.6" />
        <text x="12" y="17" fontSize="13" fontStyle="italic" {...LABEL} fontWeight="400">f(x)</text>
    </Glyph>],
    ['圆', <Glyph><circle cx="12" cy="12" r="5" stroke="#2080c0" strokeWidth="2" /></Glyph>],
]

const ICONS2 = [
    ['指标', <Glyph>
        <path d="M3 8l3-2 3 2 3-2 3 2 6-3" stroke="#e60000" />
        <path d="M3 11l3-2 3 2 3-2 3 2 6-3" stroke="#2840e0" />
        <path d="M3 16l3-2 3 2 3-2 3 2 6-3" stroke="#e60000" />
        <path d="M3 19l3-2 3 2 3-2 3 2 6-3" stroke="#2840e0" />
    </Glyph>],
    ['RSI', <b className="text-[15px] text-[#2038c8]">RSI</b>],
    ['资金', <Glyph plain>
        <text x="13" y="20" fontSize="18" fill="#909090" fontWeight="700" textAnchor="middle">S</text>
        <text x="12" y="19" fontSize="18" fill="#d83030" fontWeight="700" textAnchor="middle">S</text>
        <path d="M12 0l5 5H7zM10 19h4v3h-4z" fill="#d83030" />
    </Glyph>],
    ['移动', <Glyph plain>
        <path d="M12 1l5 6H7zM12 23l5-6H7zM1 12l6-5v10zM23 12l-6-5v10z" fill="#2050b0" />
        <path d="M12 6v12M6 12h12" stroke="#2050b0" strokeWidth="3" />
    </Glyph>],
    ['画线', <Glyph plain>
        <path d="M2 22l2-7L16 4l5 4L8 20z" fill="#f0a840" stroke="#906020" />
        <path d="M16 4l3-2 4 4-2 2z" fill="#e87878" stroke="#906020" />
        <path d="M2 22l2-4 3 2z" fill="#303030" />
    </Glyph>],
]

const CYCLES = ['1', '5', '15', '30', '60', '日', '周', '月', 'N', '多', '季', '年']

function SideBar() {
    const cell = 'grid flex-1 place-items-center text-base leading-none text-[#1c4494]'
    return (
        <nav className="-mt-[2px] w-[37px] shrink-0 border-l border-[#a0a0a0] bg-[#f0f0f0]">
            <div className="flex h-[483px] flex-col">
                {ICONS.map(([name, icon]) => (
                    <button key={name} aria-label={name} className={cell}>{icon}</button>
                ))}
            </div>
            <div className="mx-1 my-[6px] h-px bg-[#a0a0a0]" />
            <div className="flex h-[172px] flex-col">
                {ICONS2.map(([name, icon]) => (
                    <button key={name} aria-label={name} className={cell}>{icon}</button>
                ))}
            </div>
            <div className="mx-1 my-[6px] h-px bg-[#a0a0a0]" />
            <div className="flex h-[484px] flex-col">
                <button aria-label="F5" className={cell}>
                    <Glyph><text x="12" y="17" fontSize="14" {...LABEL}>F5</text></Glyph>
                </button>
                <button aria-label="刷新" className={cell}>
                    <Glyph>
                        <path d="M4 11V5l3 2c4-3 9-2 11 3l-4 1c-1-2-3-3-5-2l2 2z" fill="#50b840" />
                        <path d="M20 13v6l-3-2c-4 3-9 2-11-3l4-1c1 2 3 3 5 2l-2-2z" fill="#50b840" />
                    </Glyph>
                </button>
                {CYCLES.map(c => (
                    <button
                        key={c}
                        className={`${cell} ${/\d|N/.test(c) ? '' : 'text-lg leading-none'} ${c === '日' ? 'border border-[#a0a0a0] border-r-white border-b-white bg-[#f8f8f8]' : ''}`}
                    >
                        {c}
                    </button>
                ))}
            </div>
        </nav>
    )
}

function StatusBar() {
    return (
        <footer className="flex h-[37px] items-center border-t border-[#a00000] bg-[#f0f0f0] text-[21px] leading-none font-bold whitespace-nowrap text-[#202020]">
            <svg viewBox="0 0 22 22" className="mr-[3px] size-[22px]">
                <rect width="22" height="20" y="1" rx="2" fill="#f0a020" />
                <rect x="4" y="4" width="14" height="14" fill="#fff0c0" />
                <rect x="7" y="7" width="8" height="8" fill="#f0a020" />
            </svg>
            {INDEXES.map(v => (
                <div key={v.name} className="mr-[26px] flex items-center gap-[19px]">
                    <span className={v.tone}>
                        <span className="mr-2 text-[23px] leading-none font-light text-[#202020]">{v.name}</span>
                        {v.last}
                    </span>
                    <span className={v.tone}>{v.diff}</span>
                    {v.pct && <span className={v.tone}>{v.pct}</span>}
                    {v.amount && (
                        <span>{v.amount}<span className="text-[23px] leading-none font-light">亿</span></span>
                    )}
                </div>
            ))}
        </footer>
    )
}

function InputBar() {
    const key = 'grid h-5 place-items-center border border-white border-r-[#404040] border-b-[#404040] bg-[#c0c0c0] leading-none'
    return (
        <div className="absolute top-[903px] left-[1282px] flex h-[26px] w-[158px] items-center gap-px border-2 border-[#f4f0e4] border-r-[#908c80] border-b-[#908c80] bg-[#d8d4c8] px-px text-base text-black">
            <button className={`${key} w-5 font-bold text-[#900000]`}>A</button>
            <button className={`${key} flex-1 whitespace-nowrap`}>极品五笔</button>
            <button aria-label="全角半角" className={`${key} w-5`}>
                <svg viewBox="0 0 14 14" className="size-[14px]"><path d="M9 1a7 7 0 1 1-8 9c5 1 9-3 8-9z" /></svg>
            </button>
            <button aria-label="标点" className={`${key} w-5`}>
                <svg viewBox="0 0 14 14" className="size-[14px]"><path d="M3 5h2v2H3zM9 5h2v3l-2 2V7H9z" /></svg>
            </button>
            <button aria-label="软键盘" className={`${key} w-[21px]`}>
                <svg viewBox="0 0 18 14" className="h-[14px] w-[18px]" stroke="#fff" strokeDasharray="2 1" strokeWidth="2">
                    <path d="M1 3h16M1 7h16M1 11h16" />
                </svg>
            </button>
        </div>
    )
}

function Banner() {
    return (
        <div className="absolute right-0 bottom-0 left-1/2 flex h-[109px] items-center bg-[#7ea9d9] pl-5 leading-none whitespace-nowrap">
            <strong className="pb-1 text-[76px] leading-none font-black text-[#1a0084]">公式指标网</strong>
            <svg viewBox="0 0 106 106" className="ml-[33px] size-[106px] shrink-0" fill="none">
                <path d="M6 49A47 47 0 0 1 41 7" stroke="#d65c4a" strokeWidth="10" />
                <path d="M65 7A47 47 0 0 1 100 49" stroke="#d65c4a" strokeWidth="10" />
                <path d="M99 55A46 46 0 0 1 48 99" stroke="#e8ca4a" strokeWidth="11" />
                <path
                    fillRule="evenodd"
                    d="M44 1h18l-3 10v14h5v5h10v19H32V30h10v-5h5V11zM53 8a4 4 0 1 0 0 8 4 4 0 0 0 0-8zM33 37h11v3H33zM50 36h3v14h-3zM60 37h3v13h-3z"
                    fill="#e8ca4a"
                />
                <path
                    fillRule="evenodd"
                    d="M32 54h42v10H64l4 6h6v17H61v-9l-5-7v19h-6V71l-5 7v9H32V70h6l4-6H32zM44 58h18v2H44z"
                    fill="#e8ca4a"
                />
                <path id="coin-rim" d="M4 55A50 50 0 0 0 46 102" />
                <text fontSize="10" fontWeight="700" fill="#fff">
                    <textPath href="#coin-rim">www.9m8.cn</textPath>
                </text>
            </svg>
            <strong className="ml-[38px] pb-[14px] font-['Liberation_Serif',serif] text-[89px] leading-none text-white [-webkit-text-stroke:3px_white]">
                www.9m8.cn
            </strong>
        </div>
    )
}

export default function App() {
    return (
        <div className={`relative flex min-h-screen flex-col overflow-hidden bg-black ${UI}`}>
            <MenuBar />
            <div className="flex flex-1">
                <main className="min-w-0 flex-1">
                    <PeriodBar />
                    <PriceChart />
                    <ProfitChart />
                    <TimeAxis />
                    <TabRow items={TABS} tone={t => (t === '设置' ? 'text-[#54ffff]' : 'text-[#c0c0c0]')} />
                    <TabRow items={LINKS} tone={t => (/资讯|问答/.test(t) ? 'text-[#c0c000]' : 'text-[#c0c0c0]')} />
                </main>
                <QuotePanel />
                <SideBar />
            </div>
            <StatusBar />
            <InputBar />
            <Banner />
        </div>
    )
}
